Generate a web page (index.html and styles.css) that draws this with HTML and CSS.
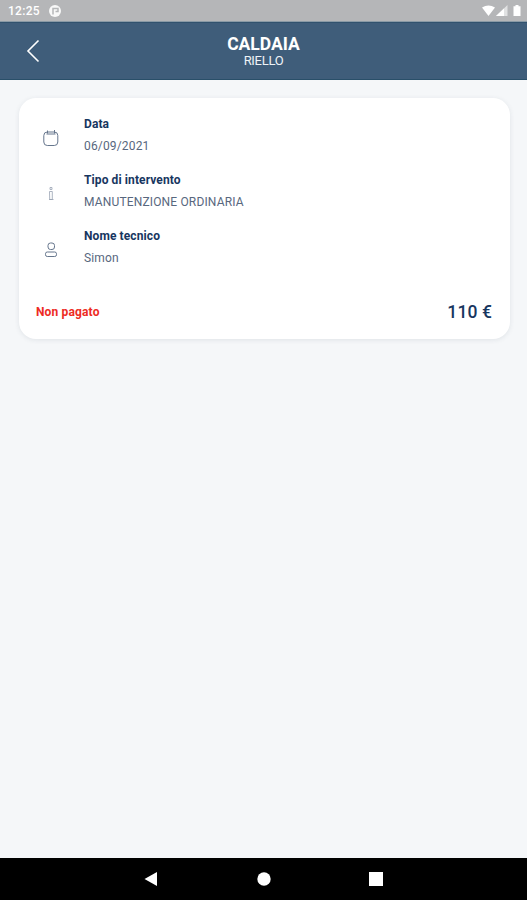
FILE: index.html
```
<!DOCTYPE html>
<html lang="it">
<head>
<meta charset="utf-8">
<title>Caldaia</title>
<link rel="stylesheet" href="styles.css">
</head>
<body>
<div class="status">
  <span class="clock">12:25</span>
  <svg class="app" width="12" height="12" viewBox="0 0 12 12"><circle cx="6" cy="6" r="6" fill="#f8f8f8"/><path d="M4 9.500V3.500H9V6.500H6.500" fill="none" stroke="#b5b6b8" stroke-width="1.500"/></svg>
  <svg class="signals" width="40" height="12" viewBox="0 0 40 12"><path d="M0 2.500Q6.500-1.500 13 2.500L6.500 11Z" fill="#fff"/><path d="M14 11L25.500 0V11Z" fill="#e1e2e3"/><path d="M14 11L22 3.500V11Z" fill="#fff"/><path d="M31.500 1.200H33.500V0H36.500V1.200H38.500V11H31.500Z" fill="#fff"/></svg>
</div>
<header class="header">
  <svg class="back" width="14" height="24" viewBox="0 0 14 24"><path d="M12.500 1.500L2 12L12.500 22.500" fill="none" stroke="#fff" stroke-width="1.600"/></svg>
  <div class="heading"><h1>CALDAIA</h1><p>RIELLO</p></div>
</header>
<main class="content">
  <section class="card">
    <div class="row">
      <svg class="icon" width="18" height="18" viewBox="0 0 18 18"><rect x="1.800" y="3" width="14" height="13.500" rx="3.500"/><path d="M4.500 5H13.500M12.500 1V4.500M5.500 1.500V4.500"/></svg>
      <div><h2>Data</h2><p>06/09/2021</p></div>
    </div>
    <div class="row">
      <svg class="icon faint" width="18" height="18" viewBox="0 0 18 18"><path d="M8 2.500H10V4.500H8ZM7.500 6.500H10.300V14.500H7.700ZM7 14.500H11.500"/></svg>
      <div><h2>Tipo di intervento</h2><p>MANUTENZIONE ORDINARIA</p></div>
    </div>
    <div class="row">
      <svg class="icon" width="18" height="18" viewBox="0 0 18 18"><rect x="6" y="2" width="6.500" height="6.500" rx="2.500"/><rect x="3.500" y="11" width="11" height="4.500" rx="1.800"/></svg>
      <div><h2>Nome tecnico</h2><p>Simon</p></div>
    </div>
    <div class="summary"><span class="unpaid">Non pagato</span><span class="price">110 €</span></div>
  </section>
</main>
<nav class="nav">
  <svg width="14" height="14" viewBox="0 0 14 14"><path d="M.5 7L13 0V14Z"/></svg>
  <svg width="14" height="14" viewBox="0 0 14 14"><circle cx="7" cy="7" r="6.700"/></svg>
  <svg width="14" height="14" viewBox="0 0 14 14"><path d="M0 0H14V14H0Z"/></svg>
</nav>
</body>
</html>
```
FILE: styles.css
```
* { box-sizing: border-box; }
body { margin: 0; height: 900px; display: flex; flex-direction: column; overflow: hidden; background: #f5f7f9; font-family: Roboto, "Liberation Sans", sans-serif; color: #17365f; }
h1, h2, p { margin: 0; }
svg { display: block; flex: none; }
.status { height: 22px; display: flex; align-items: center; background: #b5b6b8; padding: 0 5px 0 8px; border-bottom: 1px solid #8a9aa6; }
.clock { width: 41px; color: #fff; font-size: 12px; font-weight: 500; letter-spacing: .3px; line-height: 22px; }
.signals { margin-left: auto; }
.header { height: 58px; display: grid; grid-template-columns: 60px 1fr 60px; align-items: center; background: #3f5d7a; border-top: 1px solid #31526e; border-bottom: 1px solid #294f69; color: #fff; }
.back { margin-left: 26px; }
.heading { text-align: center; margin-top: 1px; }
h1 { font-size: 17.500px; line-height: 18px; font-weight: 700; letter-spacing: 0; }
.heading p { font-size: 13px; line-height: 15px; letter-spacing: -.3px; color: #eef3f7; }
.content { flex: 1; padding: 18px 17px 0 19px; }
.card { height: 241px; padding: 15px 18px 0 17px; border-radius: 17px; background: #fff; box-shadow: 0 1px 5px rgba(40, 60, 80, .1); }
.row { height: 56px; display: flex; }
.row > div { margin-left: 24px; }
.icon { margin: 16px 0 0 6px; fill: none; stroke: #66768d; stroke-width: 1; }
.faint { stroke: #98a2b2; stroke-width: .8; }
h2 { font-size: 12px; line-height: 22px; font-weight: 700; letter-spacing: .1px; color: #17365f; }
.row p { font-size: 12px; line-height: 22px; letter-spacing: .16px; color: #58677e; }
.summary { display: flex; align-items: center; justify-content: space-between; height: 24px; margin-top: 18px; }
.unpaid { padding-top: 1px; font-size: 12px; font-weight: 700; letter-spacing: .15px; color: #ed2b24; }
.price { padding-top: 1px; font-size: 17.500px; font-weight: 500; letter-spacing: .1px; }
.nav { height: 42px; display: flex; justify-content: space-between; align-items: center; padding: 0 144px; background: #000; fill: #fff; }
```
